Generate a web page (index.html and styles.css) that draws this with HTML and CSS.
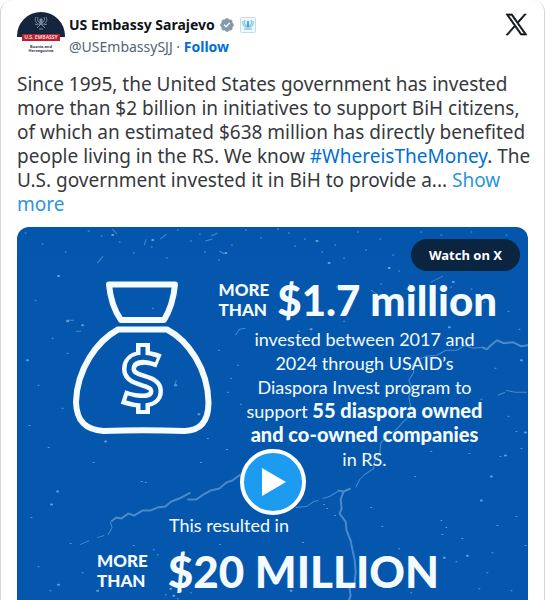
FILE: index.html
```html
<!DOCTYPE html>
<html lang="en">
<head>
    <meta charset="UTF-8">
    <meta name="viewport" content="width=device-width, initial-scale=1.0">
    <title>US Embassy Sarajevo on X</title>
    <link rel="stylesheet" href="styles.css">
</head>
<body>
    <article class="tweet">
        <header class="tweet-header">
            <svg class="avatar" viewBox="0 0 48 48" aria-hidden="true">
                <defs>
                    <clipPath id="avatar-clip"><circle cx="24" cy="24" r="24"/></clipPath>
                </defs>
                <g clip-path="url(#avatar-clip)">
                    <rect width="48" height="48" fill="#fff"/>
                    <rect width="48" height="25" fill="#14253d"/>
                </g>
                <g fill="none" stroke="#7b8a9c" stroke-width="1">
                    <path d="M19 5c-2 4 0 6 4 8M29 5c2 4 0 6-4 8M21 5c-1 3 0 5 2 6M27 5c1 3 0 5-2 6M20 16l4-4 4 4M18 12l3 1M30 12l-3 1M22 17h4"/>
                    <path d="M23 7h2v5l-1 1-1-1z" fill="#7b8a9c"/>
                </g>
                <rect x="5" y="22" width="38" height="7" fill="#b8202f"/>
                <text class="avatar-label" x="24" y="27" text-anchor="middle">U.S. EMBASSY</text>
                <text class="avatar-place" x="24" y="36" text-anchor="middle">Bosnia and</text>
                <text class="avatar-place" x="24" y="40" text-anchor="middle">Herzegovina</text>
            </svg>
            <div class="author">
                <div class="author-name">
                    <a href="#">US Embassy Sarajevo</a>
                    <svg class="verified" viewBox="0 0 22 22" role="img" aria-label="Verified account">
                        <path fill="#829aab" d="M20.396 11c-.018-.646-.215-1.275-.57-1.816-.354-.54-.852-.972-1.438-1.246.223-.607.27-1.264.14-1.897-.131-.634-.437-1.218-.882-1.687-.47-.445-1.053-.75-1.687-.882-.633-.13-1.29-.083-1.897.14-.273-.587-.704-1.086-1.245-1.44S11.647 1.62 11 1.604c-.646.017-1.273.213-1.813.568s-.969.854-1.24 1.44c-.608-.223-1.267-.272-1.902-.14-.635.13-1.22.436-1.69.882-.445.47-.749 1.055-.878 1.688-.13.633-.08 1.29.144 1.896-.587.274-1.087.705-1.443 1.245-.356.54-.555 1.17-.574 1.817.02.647.218 1.276.574 1.817.356.54.856.972 1.443 1.245-.224.606-.274 1.263-.144 1.896.13.634.433 1.218.877 1.688.47.443 1.054.747 1.687.878.633.132 1.29.084 1.897-.136.274.586.705 1.084 1.246 1.439.54.354 1.17.551 1.816.569.647-.016 1.276-.213 1.817-.567s.972-.854 1.245-1.44c.604.239 1.266.296 1.903.164.636-.132 1.22-.447 1.68-.907.46-.46.776-1.044.908-1.681s.075-1.299-.165-1.903c.586-.274 1.084-.705 1.439-1.246.354-.54.551-1.17.569-1.816z"/>
                        <path fill="#fff" d="M9.662 14.85l-3.429-3.428 1.293-1.302 2.072 2.072 4.4-4.794 1.347 1.246z"/>
                    </svg>
                    <svg class="seal" viewBox="0 0 16 16" aria-hidden="true">
                        <rect x=".5" y=".5" width="15" height="15" rx="1" fill="#f1f8fb" stroke="#c9dbe3"/>
                        <path d="M3 4c-1 3 1 6 4 6M13 4c1 3-1 6-4 6M5 3c-1 3 0 5 2 6M11 3c1 3 0 5-2 6M4 12h8" fill="none" stroke="#7cc9e6" stroke-width="1.300"/>
                        <path d="M7 4h2v6l-1 1-1-1z" fill="#5a9fbb"/>
                    </svg>
                </div>
                <div class="author-handle">
                    <a href="#">@USEmbassySJJ</a> · <a class="follow" href="#">Follow</a>
                </div>
            </div>
            <a class="x-link" href="#" aria-label="View on X">
                <svg viewBox="0 0 24 24" aria-hidden="true">
                    <path fill="#0f1419" stroke="#0f1419" stroke-width=".8" d="M14.258 10.152 23.176 0h-2.113l-7.747 8.813L7.133 0H0l9.352 13.328L0 23.973h2.113l8.176-9.309 6.531 9.309h7.133zm-2.895 3.293-.949-1.328L2.875 1.56h3.246l6.086 8.523.945 1.328 7.91 11.078h-3.246z"/>
                </svg>
            </a>
        </header>

        <p class="tweet-text">Since 1995, the United States government has invested<br>
            more than $2 billion in initiatives to support BiH citizens,<br>
            of which an estimated $638 million has directly benefited<br>
            people living in the RS. We know <a class="hashtag" href="#">#WhereisTheMoney</a>. The<br>
            U.S. government invested it in BiH to provide a... <a class="more" href="#">Show<br>more</a></p>

        <section class="video">
            <svg class="texture" viewBox="17 227 510 373" preserveAspectRatio="xMidYMin slice" aria-hidden="true">
                <!-- cracks -->
                <g fill="none" stroke="#5f9bd8" stroke-linejoin="bevel" opacity=".75">
                    <path stroke-width="2" d="M528 345l-8 1-8-4-9 1-7-3-6 5-4 4-5-2"/>
                    <path d="M481 347l-9 1-8-3-8 5-11 0-9 5-10 1-8 3-6 5 1 8-5 8 3 7-3 9 2 11-3 10-7 7-5 6-9 5-6 8-1 10-5 8-1 7-9 6-5 5-4 8"/>
                    <path stroke-width="2" d="M350 488l-7 3-6-1M343 491l-3 8 1 9-2 5 6 8 1 9 4 10 2 10 2 9 1 13-1 10-5 6 1 7-3 8"/>
                    <path d="M337 491l-8 5-7 2M318 500l-5 1-7 5-11 1"/>
                    <path stroke-width="2" d="M240 474l-8 6-6 2-7 6-9 2-7 4-7 5-9 0M190 492l-11 6-8 3-6 5-8 1-7 3-8 0-8 5-6-2-7 5-5-1-5 4"/>
                    <path d="M110 521l2 6-4 7M104 535l-7 2M89 540l-9 4"/>
                    <path d="M112 229l5 5M144 245l2-6M160 239l6-5M97 263l6-7M211 236l6-3M205 241l7-2M219 251l5 3M235 335l4-6 6-1M66 320l8 0M76 331l5 0M174 386l2-6M430 282l12-6M505 390l9 2 12 0M497 395l7-3M370 290l8 5M408 284l7 7"/>
                </g>
                <!-- specks -->
                <g fill="none" stroke="#79aee2" stroke-linecap="round" opacity=".8">
                    <path stroke-width="2" d="M112 235h1M152 240h1M225 253h1M58 276h1M67 321h1M82 325h1M27 360h1M175 385h1M198 414h1M105 441h1M57 491h1M51 504h1M504 455h1M490 476h1M480 500h1M524 432h1M443 557h1M466 555h1M316 241h1M328 263h1M388 268h1M452 282h1M310 329h1M520 360h1M448 327h1M170 588h1M173 595h1M180 590h1M290 590h1M97 590h1M58 584h1"/>
                    <path d="M25 233h1M42 244h1M65 252h1M88 231h1M101 236h1M119 242h1M133 253h1M151 247h1M166 258h1M177 230h1M190 241h1M199 234h1M204 252h1M218 260h1M231 245h1M245 230h1M260 238h1M277 229h1M288 233h1M294 246h1M304 239h1M321 252h1M334 245h1M343 258h1M357 232h1M365 250h1M379 239h1M392 255h1M398 271h1M420 232h1M440 235h1M470 232h1M505 235h1M35 300h1M52 338h1M38 385h1M29 425h1M62 408h1M48 447h1M93 462h1M141 481h1M145 482h1M200 462h1M207 438h1M226 449h1M31 517h1M70 543h1M38 566h1M50 590h1M82 572h1M133 545h1M153 549h1M157 554h1M193 532h1M219 544h1M165 594h1M177 598h1M190 592h1M234 585h1M240 404h1M227 392h1M218 350h1M237 365h1M152 308h1M67 353h1M230 378h1M283 293h1M298 331h1M336 287h1M343 321h1M380 284h1M406 289h1M450 287h1M456 311h1M470 289h1M483 302h1M507 311h1M518 329h1M494 368h1M480 399h1M507 416h1M515 431h1M520 448h1M499 456h1M468 453h1M430 451h1M414 476h1M440 520h1M445 527h1M441 534h1M461 538h1M455 561h1M491 552h1M496 525h1M515 516h1M524 545h1M486 572h1M478 588h1M510 590h1M398 548h1M381 526h1M370 507h1M323 504h1M326 508h1M334 515h1M302 542h1M410 592h1"/>
                </g>
            </svg>

            <button class="watch" type="button">Watch on X</button>

            <div class="poster-top">
                <svg class="bag" viewBox="70 280 142 157" aria-hidden="true">
                    <g fill="none" stroke="#f4fbff" stroke-width="6" stroke-linejoin="round">
                        <path d="M108 284.500h66q-2 21-11 35.500h-43q-10-14-12-35.500z"/>
                        <path d="M117 329.500h49c21 11 41 39 41.500 73 0 22-11 28-24 28.500-29-1-54-1-81 0-16-1-27-8-27.500-29 1-33 21-61 42-72.500z"/>
                    </g>
                    <g fill="none" stroke="#f4fbff" stroke-width="14">
                        <path d="M158 361c-12-5-30-5-30 8 0 14 27 9 27 22 0 12-18 11-33 6"/>
                        <path d="M142 343v15M142 398v16"/>
                    </g>
                    <g fill="none" stroke="#0457ac" stroke-width="5">
                        <path d="M155 360c-12-5-27-4-27 9 0 14 27 9 27 22 0 12-16 11-29 7"/>
                        <path d="M142 347v11M142 398v12"/>
                    </g>
                </svg>
                <div class="poster-copy">
                    <div class="amount">
                        <span class="more-than">MORE<br>THAN</span>
                        <strong class="figure">$1.7 million</strong>
                    </div>
                    <p class="details">invested between 2017 and<br>
                        2024 through USAID’s<br>
                        Diaspora Invest program to<br>
                        support <b>55 diaspora owned</b><br>
                        <b>and co-owned companies</b><br>
                        in RS.</p>
                </div>
            </div>

            <div class="result">
                <p class="result-intro">This resulted in</p>
                <div class="amount result-amount">
                    <span class="more-than">MORE<br>THAN</span>
                    <strong class="figure figure-large">$20 MILLION</strong>
                </div>
            </div>

            <button class="play" type="button" aria-label="Play video">
                <svg viewBox="0 0 24 28" aria-hidden="true"><path fill="#fff" d="M0 0l24 14L0 28z"/></svg>
            </button>
        </section>
    </article>
</body>
</html>
```

FILE: styles.css
```css
* {
    box-sizing: border-box;
}
body {
    margin: 0;
    background-color: #fff;
    color: #0f1419;
    font-family: "Noto Sans", "Open Sans", sans-serif;
}
a {
    color: inherit;
    text-decoration: none;
}
p {
    margin: 0;
}
.tweet {
    display: flex;
    flex-direction: column;
    min-height: 100vh;
    margin-right: 1px;
    padding: 12px 16px 0;
    border: 1px solid #cfd9de;
    border-width: 0 1px;
    border-radius: 12px 12px 0 0;
}
.tweet-header {
    display: flex;
    align-items: flex-start;
    height: 60px;
}
.avatar {
    width: 48px;
    height: 48px;
    margin-right: 4px;
}
.avatar-label {
    fill: #f3d5d8;
    font-size: 5px;
    font-weight: 700;
}
.avatar-place {
    fill: #303a4a;
    font-size: 4px;
    font-weight: 700;
}
.author {
    flex: 1;
    font-size: 14px;
    line-height: 22px;
    padding-top: 2px;
}
.author-name {
    display: flex;
    align-items: center;
    gap: 4px;
    font-weight: 700;
}
.verified {
    width: 16px;
    height: 16px;
}
.seal {
    width: 16px;
    height: 16px;
    margin-left: 1px;
}
.author-handle {
    color: #536471;
}
.follow {
    color: #006fd6;
    font-weight: 700;
}
.x-link svg {
    display: block;
    width: 21px;
    height: 21px;
    margin: 2px 1px 0 0;
    overflow: visible;
}
.tweet-text {
    color: #36393d;
    font-size: 19px;
    line-height: 24px;
    white-space: nowrap;
}
.hashtag {
    color: #006fd6;
}
.more {
    color: #2b95e0;
}
.video {
    position: relative;
    flex: 1;
    margin-top: 11px;
    padding-top: 53px;
    border-radius: 12px 12px 0 0;
    background-color: #0457ac;
    color: #f4fbff;
    font-family: Lato, sans-serif;
    overflow: hidden;
}
.texture {
    position: absolute;
    top: 0;
    left: 0;
    width: 100%;
}
.watch {
    position: absolute;
    top: 12px;
    right: 8px;
    width: 109px;
    height: 32px;
    padding: 0;
    border: none;
    border-radius: 16px;
    background-color: #0b2440;
    color: #fff;
    font-family: "Noto Sans", sans-serif;
    font-size: 13px;
    font-weight: 700;
}
.poster-top {
    position: relative;
    display: flex;
    justify-content: center;
    gap: 6px;
    padding-left: 36px;
}
.bag {
    width: 142px;
    height: 157px;
}
.poster-copy {
    width: 292px;
}
.amount {
    display: flex;
    align-items: center;
    gap: 8px;
}
.more-than {
    font-size: 17px;
    font-weight: 900;
    line-height: 20px;
}
.figure {
    font-size: 42px;
    font-weight: 900;
    line-height: 40px;
}
.details {
    margin-top: 7px;
    font-size: 18px;
    line-height: 24px;
    text-align: center;
}
.details b {
    font-size: 20px;
    font-weight: 900;
    line-height: 20px;
}
.result {
    position: relative;
    padding: 42px 0 0 80px;
}
.result-intro {
    padding-left: 72px;
    font-size: 18px;
    line-height: 24px;
}
.result-amount {
    gap: 20px;
    margin-top: 14px;
}
.figure-large {
    font-size: 44px;
}
.play {
    position: absolute;
    top: 222px;
    left: 50%;
    display: flex;
    align-items: center;
    justify-content: center;
    width: 66px;
    height: 66px;
    padding: 0 0 0 2px;
    border: 4px solid #fff;
    border-radius: 50%;
    background-color: #1d9bf0;
    transform: translateX(-50%);
}
.play svg {
    width: 24px;
    height: 28px;
}
```
